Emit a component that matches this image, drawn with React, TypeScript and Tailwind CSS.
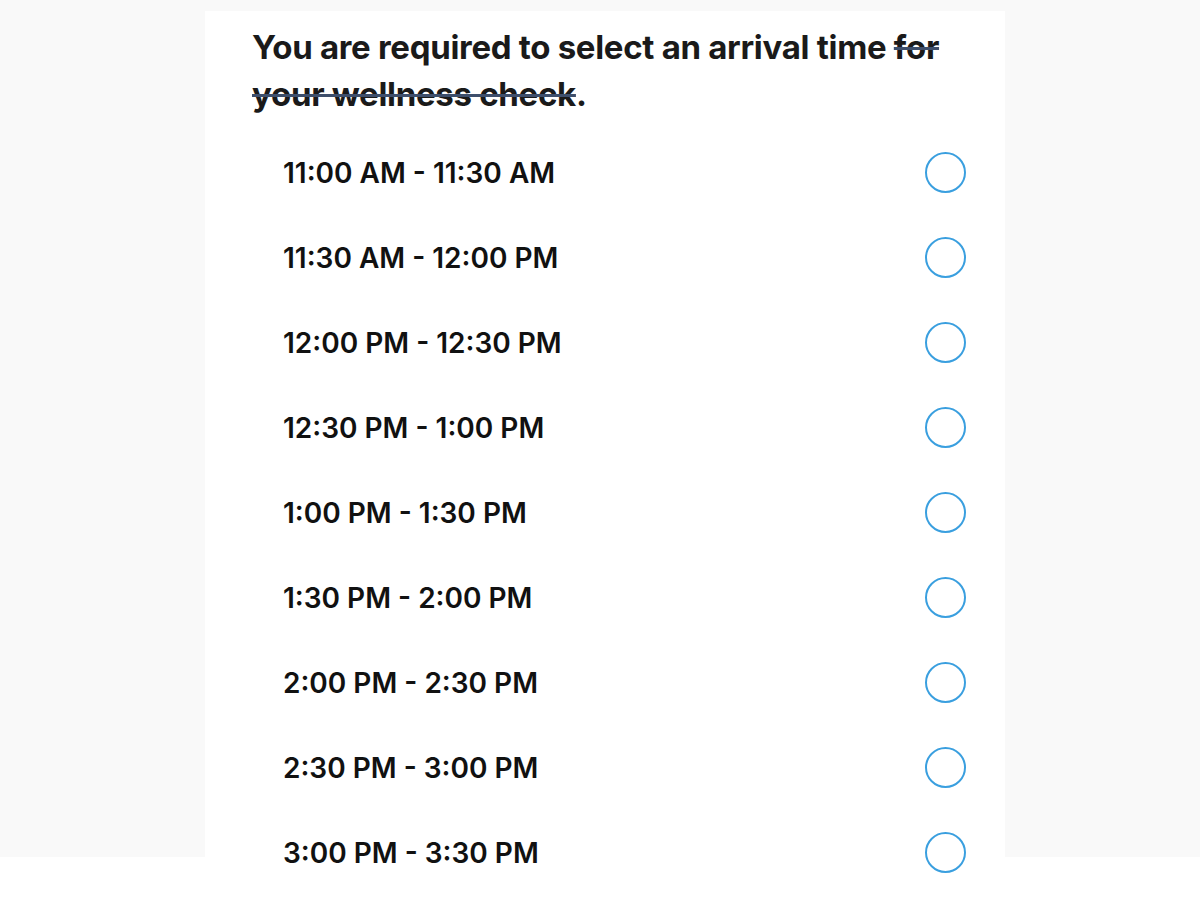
const SLOTS = [
  '11:00 AM - 11:30 AM',
  '11:30 AM - 12:00 PM',
  '12:00 PM - 12:30 PM',
  '12:30 PM - 1:00 PM',
  '1:00 PM - 1:30 PM',
  '1:30 PM - 2:00 PM',
  '2:00 PM - 2:30 PM',
  '2:30 PM - 3:00 PM',
  '3:00 PM - 3:30 PM',
];

function Radio() {
  return <span className="block w-[41px] h-[41px] rounded-full border-2 border-[#3a9fdf] shrink-0" />;
}

export default function App() {
  return (
    <div className="min-h-screen bg-white" style={{ fontFamily: 'Inter, "Noto Sans", sans-serif' }}>
      <div className="h-[857px] bg-[#f9f9f9] pt-[11px]">
        <div className="ml-[205px] w-[800px] h-[846px] bg-white pl-[47px] pr-[39px] pt-[13px]">
          <h1 className="text-[33px] leading-[47px] font-bold text-[#1a1a1a] tracking-[-0.3px]">
            You are required to select an arrival time{' '}
            <span className="line-through decoration-[#3e4f6c] decoration-[3px]">for your wellness check</span>.
          </h1>
          <div className="mt-[12px] flex flex-col">
            {SLOTS.map((slot) => (
              <div key={slot} className="h-[85px] flex items-center justify-between pl-[31px]">
                <span className="text-[28px] font-semibold text-[#111]">{slot}</span>
                <Radio />
              </div>
            ))}
          </div>
        </div>
      </div>
    </div>
  );
}
